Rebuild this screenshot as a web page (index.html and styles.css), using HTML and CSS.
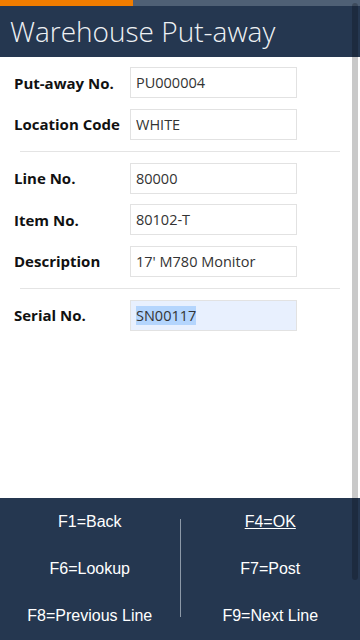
FILE: index.html
```html
<!DOCTYPE html>
<html lang="en">
<head>
    <meta charset="UTF-8">
    <meta name="viewport" content="width=device-width, initial-scale=1.0">
    <title>Warehouse Put-away</title>
    <link rel="stylesheet" href="styles.css">
</head>
<body>
    <div class="progress"><div class="progress-done"></div></div>

    <header class="header">
        <h1>Warehouse Put-away</h1>
    </header>

    <main class="content">
        <div class="row">
            <label for="putaway_no">Put-away No.</label>
            <input type="text" id="putaway_no" value="PU000004">
        </div>
        <div class="row">
            <label for="location_code">Location Code</label>
            <input type="text" id="location_code" value="WHITE">
        </div>

        <hr class="sep">

        <div class="row">
            <label for="line_no">Line No.</label>
            <input type="text" id="line_no" value="80000">
        </div>
        <div class="row">
            <label for="item_no">Item No.</label>
            <input type="text" id="item_no" value="80102-T">
        </div>
        <div class="row">
            <label for="description">Description</label>
            <input type="text" id="description" value="17' M780 Monitor">
        </div>

        <hr class="sep">

        <div class="row">
            <label>Serial No.</label>
            <div class="field active"><span class="selected">SN00117</span></div>
        </div>
    </main>

    <footer class="keys">
        <span class="key">F1=Back</span>
        <span class="divider"></span>
        <span class="key current">F4=OK</span>
        <span class="key">F6=Lookup</span>
        <span class="key">F7=Post</span>
        <span class="key">F8=Previous Line</span>
        <span class="key">F9=Next Line</span>
    </footer>

    <div class="scroll-thumb"></div>
</body>
</html>
```

FILE: styles.css
```css
html, body {
    margin: 0;
    height: 100%;
}
body {
    display: flex;
    flex-direction: column;
    font-family: "Open Sans", Arial, sans-serif;
    background: #fff;
    overflow: hidden;
}
.progress {
    height: 6px;
    background: #4f6075;
    flex: none;
}
.progress-done {
    width: 133px;
    height: 100%;
    background: #f07c00;
}
.header {
    height: 51px;
    background: #253750;
    flex: none;
}
.header h1 {
    margin: 0;
    padding-left: 10px;
    font-size: 28px;
    font-weight: 300;
    line-height: 51px;
    color: #eef1f4;
}
.content {
    flex: 1;
    display: flex;
    flex-direction: column;
    gap: 10.5px;
    padding: 10px 0 0 14px;
}
.row {
    display: flex;
    align-items: center;
    height: 31px;
}
.row label {
    width: 116px;
    font-size: 15px;
    font-weight: 700;
    color: #111;
}
.row input, .field {
    box-sizing: border-box;
    width: 167px;
    height: 31px;
    padding: 0 5px;
    border: 1px solid #e2e2e2;
    font-family: "Open Sans", Arial, sans-serif;
    font-size: 14.5px;
    color: #333;
    background: #fff;
}
.field {
    display: flex;
    align-items: center;
}
.field.active {
    background: #e8f0fe;
}
.selected {
    background: #b4d5fd;
}
.sep {
    margin: 0.5px 20px 0.5px 6px;
    border: none;
    border-top: 1px solid #e4e4e4;
}
.keys {
    flex: none;
    height: 142px;
    background: #253750;
    display: grid;
    grid-template-columns: 1fr 1px 1fr;
    grid-template-rows: 47px 47px 47px;
    align-items: center;
    justify-items: center;
    font-family: "Liberation Sans", Arial, sans-serif;
    font-size: 16px;
    color: #fff;
}
.key:nth-child(4), .key:nth-child(6) {
    grid-column: 1;
}
.key:nth-child(5), .key:nth-child(7) {
    grid-column: 3;
}
.divider {
    grid-column: 2;
    grid-row: 1 / 4;
    align-self: stretch;
    width: 1px;
    margin: 21px 0 22px;
    background: #8d99a8;
}
.current {
    text-decoration: underline;
}
.scroll-thumb {
    position: fixed;
    top: 3px;
    right: 2px;
    width: 6px;
    height: 577px;
    border-radius: 3px;
    background: rgba(0, 0, 0, 0.21);
}
```
